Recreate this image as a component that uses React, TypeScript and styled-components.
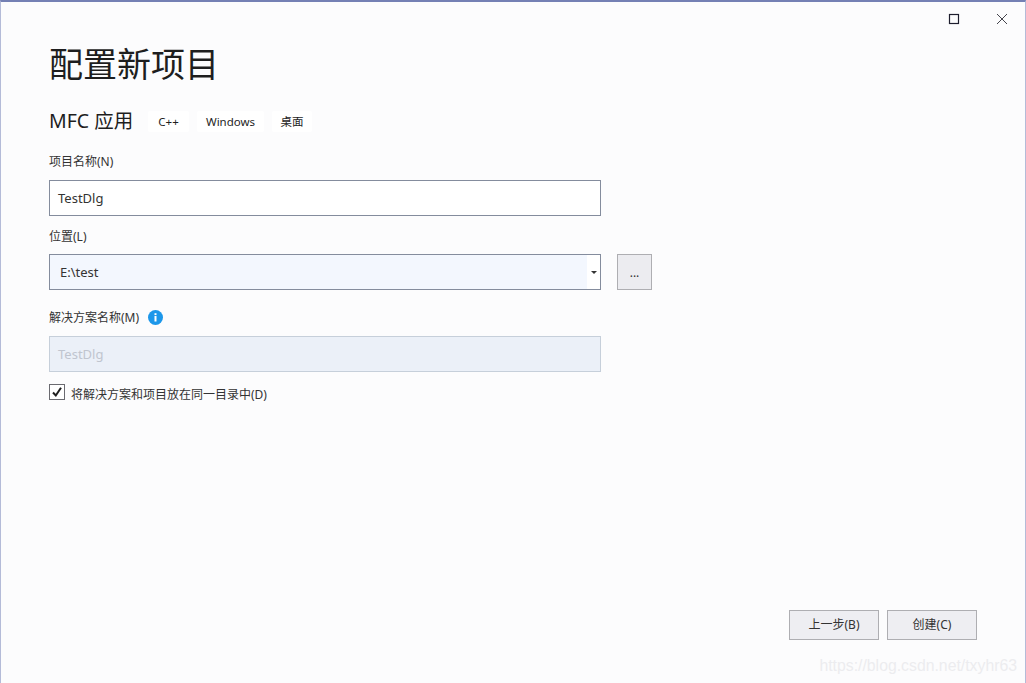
import styled, { createGlobalStyle } from "styled-components";

const GlobalStyle = createGlobalStyle`
  html, body {
    margin: 0;
    padding: 0;
    background: #fcfcfd;
  }
  * {
    box-sizing: border-box;
  }
`;

const Window = styled.div`
  position: relative;
  width: 1026px;
  height: 683px;
  overflow: hidden;
  display: flex;
  flex-direction: column;
  background: #fcfcfd;
  border-top: 2px solid #7480b4;
  border-left: 1px solid #b4bbd8;
  border-right: 1px solid #b4bbd8;
  color: #1e1e1e;
  font-family: "Noto Sans", "Noto Sans CJK SC", sans-serif;
`;

const TitleBar = styled.div`
  height: 34px;
  display: flex;
  justify-content: flex-end;
  align-items: center;
  padding: 0 17px 0 0;
  gap: 36px;
  flex-shrink: 0;
`;

const WinIcon = styled.svg`
  width: 12px;
  height: 12px;
  display: block;
`;

const Content = styled.div`
  flex: 1;
  display: flex;
  flex-direction: column;
  padding: 0 48px;
`;

const Title = styled.h1`
  margin: 0;
  height: 56px;
  font-size: 34px;
  line-height: 54px;
  font-weight: 400;
  color: #1e1e1e;
  font-family: "Noto Sans CJK SC", sans-serif;
`;

const SubRow = styled.div`
  display: flex;
  align-items: center;
  margin-top: 18px;
  height: 22px;
`;

const SubTitle = styled.span`
  font-size: 19.5px;
  line-height: 22px;
  margin-right: 15px;
  width: 84px;
  white-space: nowrap;
`;

const Chips = styled.div`
  display: flex;
  gap: 8px;
`;

const Chip = styled.span<{ $w: number }>`
  width: ${(p) => p.$w}px;
  height: 21px;
  display: flex;
  align-items: center;
  justify-content: center;
  background: #ffffff;
  border-radius: 2px;
  font-size: 11.5px;
  color: #1e1e1e;
`;

const Label = styled.div<{ $top: number }>`
  display: flex;
  align-items: center;
  gap: 9px;
  height: 18px;
  padding-top: 2px;
  margin-top: ${(p) => p.$top}px;
  font-size: 12px;
  color: #333333;
`;

const Field = styled.div<{ $top: number; $disabled?: boolean }>`
  width: 552px;
  height: 36px;
  margin-top: ${(p) => p.$top}px;
  display: flex;
  align-items: center;
  padding-left: 8px;
  padding-bottom: 1px;
  font-size: 13px;
  color: ${(p) => (p.$disabled ? "#c0c5cf" : "#333333")};
  background: ${(p) => (p.$disabled ? "#ebf0f8" : "#ffffff")};
  border: 1px solid ${(p) => (p.$disabled ? "#c6cfda" : "#848c9d")};
`;

const ComboRow = styled.div`
  display: flex;
  gap: 16px;
  margin-top: 10px;
`;

const Combo = styled.div`
  width: 552px;
  height: 36px;
  display: flex;
  border: 1px solid #848c9d;
  background: #ffffff;
`;

const ComboText = styled.div`
  flex: 1;
  display: flex;
  align-items: center;
  padding-left: 10px;
  padding-bottom: 1px;
  font-size: 13px;
  color: #333333;
  background: #f3f7fe;
`;

const ComboArrow = styled.div`
  width: 13px;
  display: flex;
  align-items: center;
  justify-content: center;
  &::after {
    content: "";
    border-left: 3px solid transparent;
    border-right: 3px solid transparent;
    border-top: 3px solid #333333;
  }
`;

const BrowseButton = styled.button`
  width: 35px;
  height: 36px;
  padding: 0;
  background: #ececf0;
  border: 1px solid #aeaeb2;
  font-family: inherit;
  font-size: 12px;
  color: #333333;
`;

const CheckRow = styled.div`
  display: flex;
  align-items: flex-start;
  gap: 6px;
  margin-top: 12px;
  height: 17px;
  font-size: 12px;
  line-height: 22px;
  color: #333333;
`;

const CheckBox = styled.span`
  width: 16px;
  height: 16px;
  display: flex;
  align-items: center;
  justify-content: center;
  background: #ffffff;
  border: 1px solid #6a6a70;
`;

const Footer = styled.div`
  display: flex;
  justify-content: flex-end;
  gap: 8px;
  padding: 0 48px 43px 0;
`;

const FooterButton = styled.button`
  width: 90px;
  height: 30px;
  padding: 0 0 2px;
  background: #eeeef2;
  border: 1px solid #aeaeb2;
  font-family: inherit;
  font-size: 12px;
  color: #333333;
`;

const Watermark = styled.div`
  position: absolute;
  right: 8px;
  bottom: 8px;
  font-family: "Liberation Sans", sans-serif;
  font-size: 15.8px;
  color: #ececef;
`;

export default function App() {
  return (
    <Window>
      <GlobalStyle />
      <TitleBar>
        <WinIcon viewBox="0 0 12 12">
          <rect x="1.5" y="1.5" width="9" height="9" fill="none" stroke="#1e1e2e" strokeWidth="1.2" />
        </WinIcon>
        <WinIcon viewBox="0 0 12 12">
          <path d="M1 1 L11 11 M11 1 L1 11" stroke="#44444c" strokeWidth="1" fill="none" />
        </WinIcon>
      </TitleBar>
      <Content>
        <Title>配置新项目</Title>
        <SubRow>
          <SubTitle>MFC 应用</SubTitle>
          <Chips>
            <Chip $w={41}>C++</Chip>
            <Chip $w={67}>Windows</Chip>
            <Chip $w={40}>桌面</Chip>
          </Chips>
        </SubRow>
        <Label $top={19}>项目名称(N)</Label>
        <Field $top={11}>TestDlg</Field>
        <Label $top={10}>位置(L)</Label>
        <ComboRow>
          <Combo>
            <ComboText>E:\test</ComboText>
            <ComboArrow />
          </Combo>
          <BrowseButton>...</BrowseButton>
        </ComboRow>
        <Label $top={17}>
          解决方案名称(M)
          <svg width="15" height="15" viewBox="0 0 15 15">
            <circle cx="7.5" cy="7.5" r="7.5" fill="#1c97ea" />
            <rect x="6.5" y="6" width="2" height="5.5" fill="#ffffff" />
            <rect x="6.5" y="3.2" width="2" height="1.9" fill="#ffffff" />
          </svg>
        </Label>
        <Field $top={11} $disabled>
          TestDlg
        </Field>
        <CheckRow>
          <CheckBox>
            <svg width="12" height="12" viewBox="0 0 12 12">
              <path d="M2 6.5 L4.8 9.5 L10 1.8" fill="none" stroke="#1e1e1e" strokeWidth="2" />
            </svg>
          </CheckBox>
          将解决方案和项目放在同一目录中(D)
        </CheckRow>
      </Content>
      <Footer>
        <FooterButton>上一步(B)</FooterButton>
        <FooterButton>创建(C)</FooterButton>
      </Footer>
      <Watermark>https://blog.csdn.net/txyhr63</Watermark>
    </Window>
  );
}
